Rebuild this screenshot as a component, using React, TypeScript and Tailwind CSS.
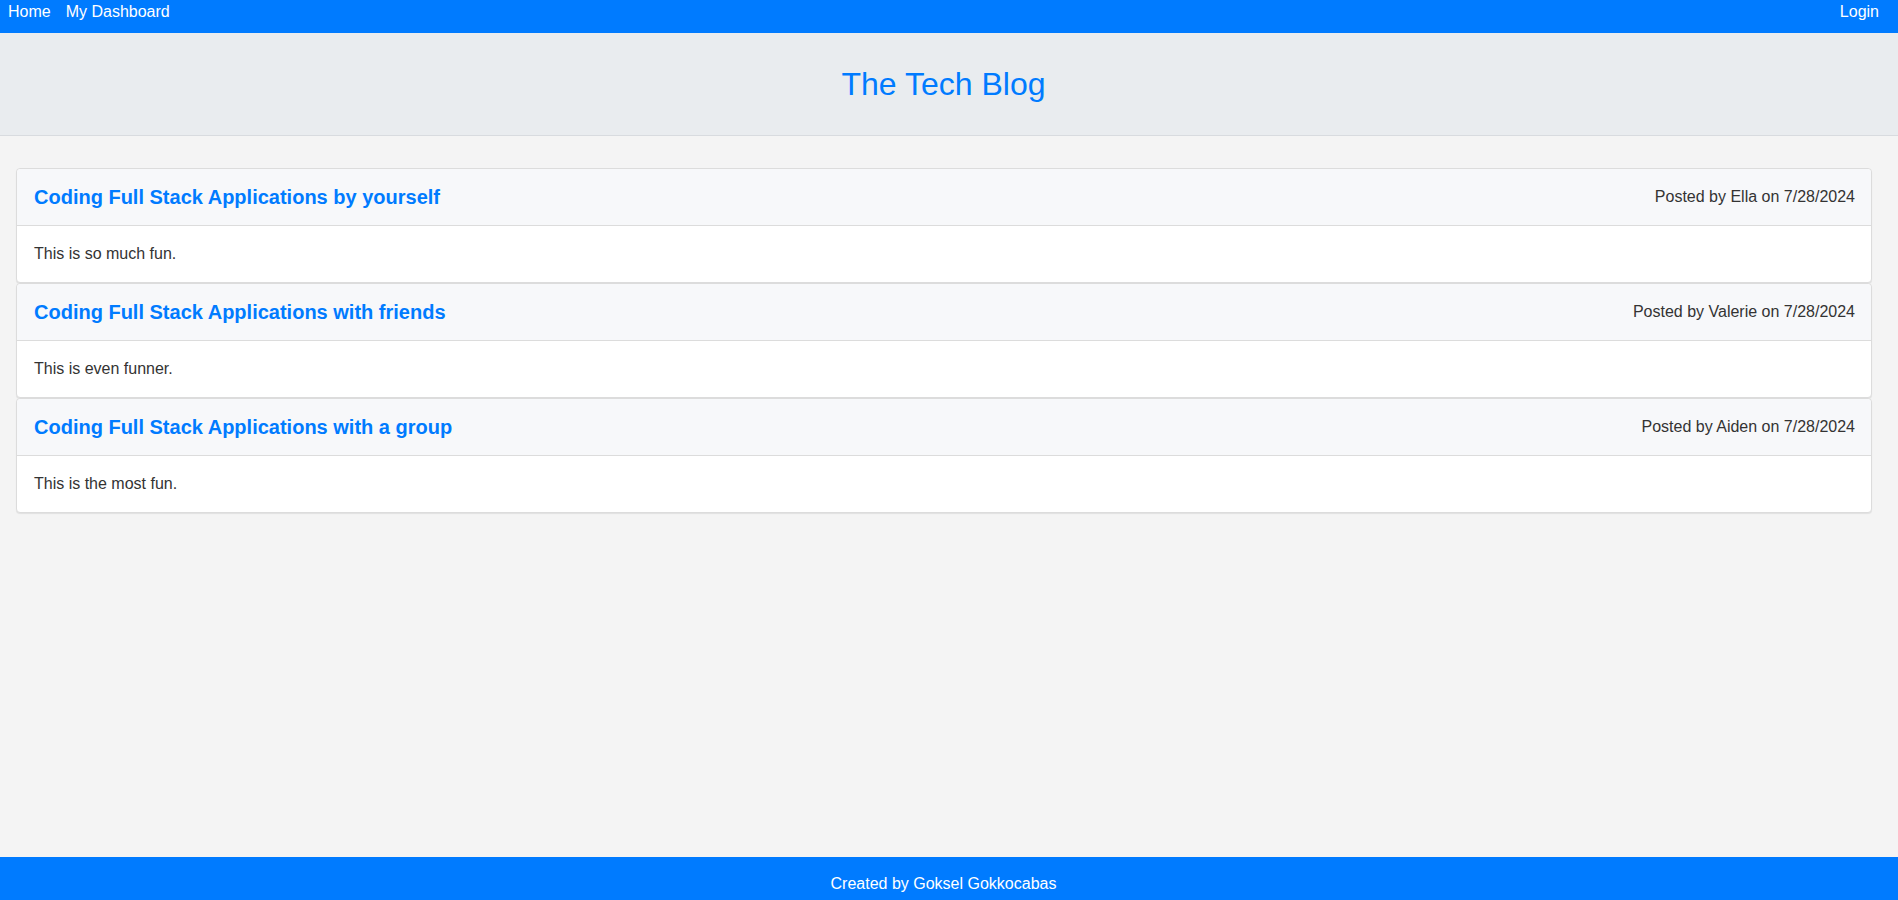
// The Tech Blog — home page with the list of posts.
const posts = [
  { title: 'Coding Full Stack Applications by yourself', author: 'Ella', date: '7/28/2024', body: 'This is so much fun.' },
  { title: 'Coding Full Stack Applications with friends', author: 'Valerie', date: '7/28/2024', body: 'This is even funner.' },
  { title: 'Coding Full Stack Applications with a group', author: 'Aiden', date: '7/28/2024', body: 'This is the most fun.' },
];

export default function App() {
  return (
    <div
      className="min-h-screen flex flex-col bg-[#f4f4f4] text-[#333333]"
      style={{ fontFamily: '"Liberation Sans", Arial, sans-serif' }}
    >
      <nav className="h-[33px] flex items-start justify-between bg-[#007bff] pl-[8px] pr-[19px] text-[16px] leading-6 text-white">
        <div className="flex gap-[15px]">
          <a href="#">Home</a>
          <a href="#">My Dashboard</a>
        </div>
        <a href="#">Login</a>
      </nav>

      <header className="h-[103px] flex items-center justify-center bg-[#e9ecef] border-b border-[#d8dbdf] pr-[11px]">
        <h1 className="text-[32px] text-[#007bff] leading-none">The Tech Blog</h1>
      </header>

      <main className="flex-1 pt-[32px] pl-[16px] pr-[26px]">
        {posts.map((post) => (
          <PostCard key={post.title} {...post} />
        ))}
      </main>

      <footer className="h-[43px] bg-[#007bff] pt-[15px] pr-[11px] text-center text-[16px] leading-6 text-white">
        Created by Goksel Gokkocabas
      </footer>
    </div>
  );
}

function PostCard({ title, author, date, body }: { title: string; author: string; date: string; body: string }) {
  return (
    <div className="relative bg-white border border-[#dcdcdc] rounded-[4px] shadow-[0_1px_1px_rgba(0,0,0,0.08)]">
      <div className="h-[57px] flex items-center justify-between pl-[17px] pr-[16px] bg-[#f7f8fa] border-b border-[#dcdcdc] rounded-t-[4px]">
        <a href="#" className="text-[20px] font-bold text-[#007bff]">
          {title}
        </a>
        <span className="text-[16px]">
          Posted by {author} on {date}
        </span>
      </div>
      <div className="h-[56px] flex items-center px-[17px] text-[16px]">{body}</div>
    </div>
  );
}
